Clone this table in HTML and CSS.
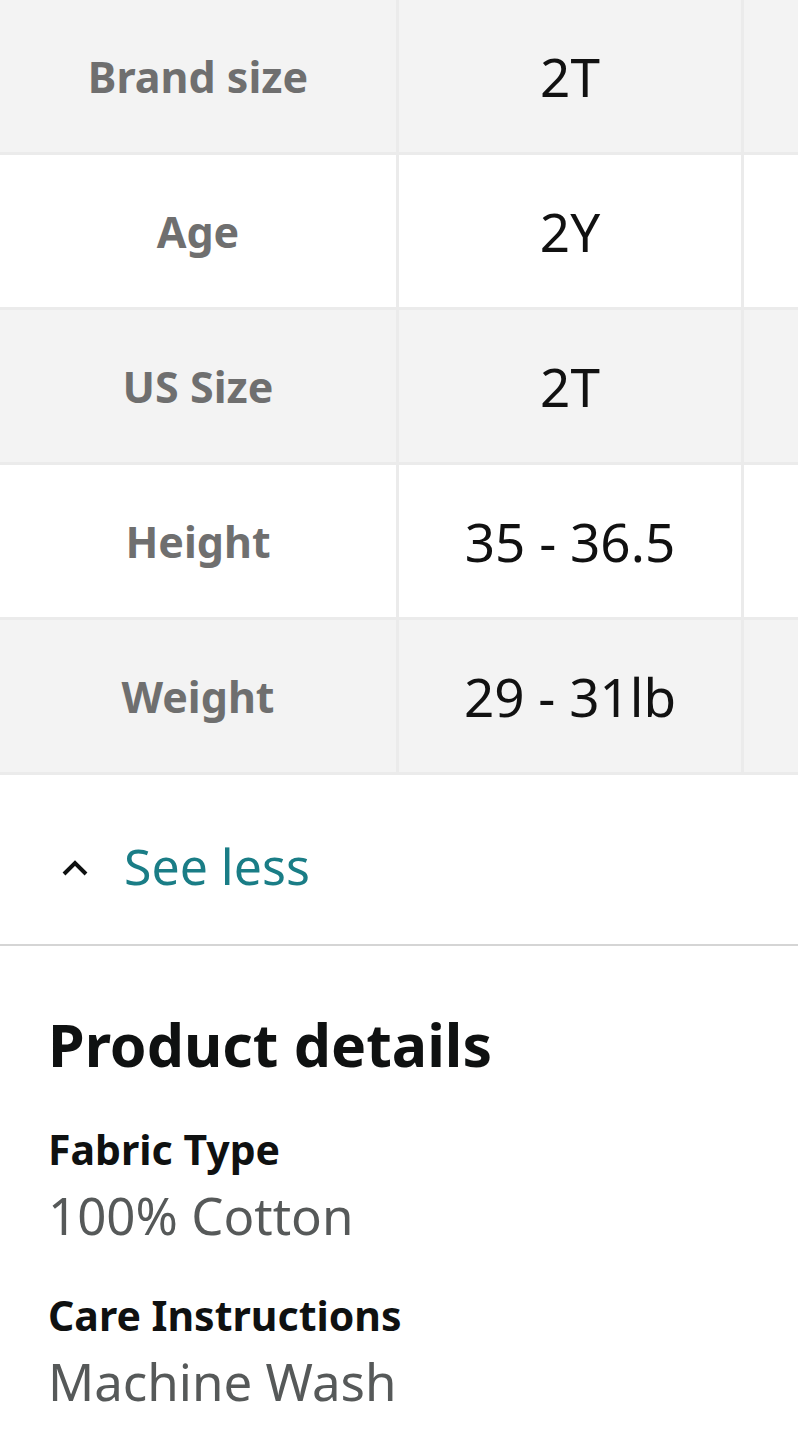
FILE: index.html
```html
<!DOCTYPE html>
<html lang="en">
<head>
    <meta charset="UTF-8">
    <meta name="viewport" content="width=device-width, initial-scale=1.0">
    <title>Size chart and product details</title>
    <link rel="stylesheet" href="styles.css">
</head>
<body>
    <div class="tabla-scroll">
        <div class="tabla-tallas">
            <div class="celda etiqueta fila-gris">Brand size</div>
            <div class="celda valor fila-gris">2T</div>
            <div class="celda fila-gris"></div>

            <div class="celda etiqueta">Age</div>
            <div class="celda valor">2Y</div>
            <div class="celda"></div>

            <div class="celda etiqueta fila-gris">US Size</div>
            <div class="celda valor fila-gris">2T</div>
            <div class="celda fila-gris"></div>

            <div class="celda etiqueta">Height</div>
            <div class="celda valor">35 - 36.5</div>
            <div class="celda"></div>

            <div class="celda etiqueta fila-gris">Weight</div>
            <div class="celda valor fila-gris">29 - 31lb</div>
            <div class="celda fila-gris"></div>
        </div>
    </div>

    <div class="ver-menos">
        <svg class="flecha" width="28" height="18" viewBox="0 0 28 18">
            <path d="M3 15 L14 4 L25 15" fill="none" stroke="#0f1111" stroke-width="4"/>
        </svg>
        <span class="ver-menos-texto">See less</span>
    </div>

    <div class="detalles">
        <h2>Product details</h2>
        <div class="detalle">
            <div class="detalle-nombre">Fabric Type</div>
            <div class="detalle-valor">100% Cotton</div>
        </div>
        <div class="detalle">
            <div class="detalle-nombre">Care Instructions</div>
            <div class="detalle-valor">Machine Wash</div>
        </div>
    </div>
</body>
</html>
```

FILE: styles.css
```css
body {
    font-family: "Noto Sans", "Open Sans", Arial, sans-serif;
    margin: 0;
    padding: 0;
    background-color: white;
    color: #0f1111;
    width: 798px;
    overflow: hidden;
}
.tabla-scroll {
    width: 798px;
    overflow: hidden;
}
.tabla-tallas {
    display: grid;
    grid-template-columns: 396px 342px 200px;
    grid-auto-rows: 152px;
    gap: 3px;
    width: 944px;
    background: #ebebeb;
    padding-bottom: 3px;
}
.celda {
    background: white;
    display: flex;
    justify-content: center;
    align-items: center;
}
.fila-gris {
    background: #f3f3f3;
}
.etiqueta {
    font-size: 43px;
    font-weight: bold;
    color: #6f6f6f;
}
.valor {
    font-size: 53px;
    color: #111111;
}
.ver-menos {
    height: 171px;
    display: flex;
    align-items: center;
    padding-left: 61px;
    padding-top: 12px;
    box-sizing: border-box;
    gap: 35px;
    border-bottom: 2px solid #d5d5d5;
}
.flecha {
    margin-top: 4px;
}
.ver-menos-texto {
    font-size: 50px;
    color: #1a7d86;
}
.detalles {
    padding: 62px 48px 0;
}
.detalles h2 {
    margin: 0 0 44px;
    font-size: 59px;
    line-height: 72px;
    font-weight: bold;
}
.detalle {
    margin-bottom: 45px;
}
.detalle-nombre {
    font-size: 41px;
    line-height: 50px;
    font-weight: bold;
}
.detalle-valor {
    margin-top: 11px;
    font-size: 51px;
    line-height: 60px;
    color: #565959;
}
```
